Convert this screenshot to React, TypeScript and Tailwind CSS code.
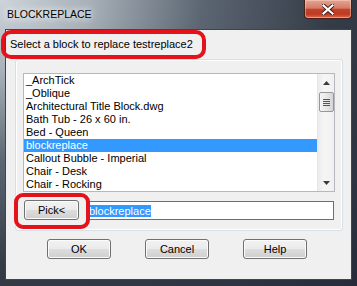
export default function App() {
  const items = [
    "_ArchTick",
    "_Oblique",
    "Architectural Title Block.dwg",
    "Bath Tub - 26 x 60 in.",
    "Bed - Queen",
    "blockreplace",
    "Callout Bubble - Imperial",
    "Chair - Desk",
    "Chair - Rocking",
  ];
  const btn =
    "w-[64px] h-[20px] rounded-[3px] border border-[#707070] bg-[linear-gradient(to_bottom,#f2f2f2_0%,#ebebeb_48%,#dddddd_52%,#cfcfcf_100%)] shadow-[inset_0_0_0_1px_#fbfbfb] flex items-center justify-center text-[11px] text-black leading-none";
  return (
    <div className="relative w-[357px] h-[286px] overflow-hidden font-['Liberation_Sans',Arial,sans-serif] bg-[radial-gradient(ellipse_at_top_left,#cdd4da_0%,#a7b0b8_18%,#5c6672_40%,#343c47_65%,#282c3a_100%)] flex flex-col">
      <div className="h-[29px] shrink-0 flex items-start">
        <div className="pl-[7px] pt-[8px] text-[10.5px] leading-[13px] text-black [text-shadow:0_0_6px_#ffffff,0_0_10px_#ffffff]">
          BLOCKREPLACE
        </div>
        <div className="ml-auto mr-[5px] w-[48px] h-[19px] rounded-b-[4px] border border-t-0 border-[#4a1f19] bg-[linear-gradient(to_bottom,#e3a593_0%,#d67c66_45%,#c4432c_52%,#bf3a22_78%,#dc6a4c_100%)] shadow-[inset_0_0_0_1px_rgba(255,220,210,0.45)] flex items-center justify-center">
          <svg width="12" height="11" viewBox="0 0 12 11">
            <path d="M1.5 1.5 L10.5 9.5 M10.5 1.5 L1.5 9.5" stroke="#3a1510" strokeWidth="4" strokeLinecap="square" />
            <path d="M1.5 1.5 L10.5 9.5 M10.5 1.5 L1.5 9.5" stroke="#ffffff" strokeWidth="2.2" strokeLinecap="square" />
          </svg>
        </div>
      </div>
      <div className="mx-[5px] h-[251px] shrink-0 border border-[#3c4650] bg-[#f0f0f0] flex flex-col">
        <div className="h-[29px] pl-[4px] pt-[8px] text-[11px] leading-[13px] text-black">
          Select a block to replace testreplace2
        </div>
        <div className="ml-[9px] w-[328px] h-[172px] rounded-[3px] border border-[#d5dfe5] shadow-[inset_0_0_0_1px_#ffffff] pl-[7px] pt-[13px] flex flex-col">
          <div className="w-[312px] h-[119px] border border-[#b5b8be] bg-white flex overflow-hidden">
            <div className="flex-1 flex flex-col overflow-hidden">
              {items.map((t, i) => (
                <div
                  key={t}
                  className={
                    "h-[13px] shrink-0 pl-[2px] text-[11px] leading-[13px] whitespace-nowrap " +
                    (i === 5 ? "bg-[#3399ff] text-white" : "text-black")
                  }
                >
                  {t}
                </div>
              ))}
            </div>
            <div className="w-[17px] shrink-0 bg-[linear-gradient(to_right,#ececec,#f6f6f6_40%,#f0f0f0)] border-l border-[#e6e6e6] flex flex-col items-center">
              <div className="h-[18px] flex items-center justify-center">
                <svg width="7" height="4" viewBox="0 0 7 4">
                  <path d="M0 4 L3.5 0 L7 4 Z" fill="#3c3c3c" />
                </svg>
              </div>
              <div className="w-[15px] h-[20px] rounded-[2px] border border-[#979797] bg-[linear-gradient(to_right,#f5f5f5,#e8e8e8_50%,#d4d4d4)] flex flex-col items-center justify-center gap-[1px]">
                <div className="w-[7px] h-[1px] bg-[#555]" />
                <div className="w-[7px] h-[1px] bg-[#555]" />
                <div className="w-[7px] h-[1px] bg-[#555]" />
                <div className="w-[7px] h-[1px] bg-[#555]" />
              </div>
              <div className="flex-1" />
              <div className="h-[16px] flex items-center justify-center">
                <svg width="7" height="4" viewBox="0 0 7 4">
                  <path d="M0 0 L3.5 4 L7 0 Z" fill="#3c3c3c" />
                </svg>
              </div>
            </div>
          </div>
          <div className="mt-[8px] flex items-start">
            <div className="ml-[1px] w-[55px] h-[20px] rounded-[3px] border border-[#707070] bg-[linear-gradient(to_bottom,#f2f2f2_0%,#ebebeb_48%,#dddddd_52%,#cfcfcf_100%)] shadow-[inset_0_0_0_1px_#fbfbfb] flex items-center justify-center text-[11px] text-black leading-none">
              Pick&lt;
            </div>
            <div className="ml-[8px] mt-[1px] w-[247px] h-[19px] border border-[#6e6e6e] bg-white flex items-center pl-[1px]">
              <span className="bg-[#3399ff] text-white text-[11px] leading-[12px]">blockreplace</span>
            </div>
          </div>
        </div>
        <div className="mt-[8px] pl-[41px] flex gap-[34px]">
          <div className={btn}>OK</div>
          <div className={btn}>Cancel</div>
          <div className={btn}>Help</div>
        </div>
      </div>
      <div className="absolute left-[1px] top-[30px] w-[205px] h-[29px] rounded-[10px] border-[4px] border-[#e3121b]" />
      <div className="absolute left-[14px] top-[193px] w-[76px] h-[36px] rounded-[9px] border-[4px] border-[#e3121b]" />
    </div>
  );
}
